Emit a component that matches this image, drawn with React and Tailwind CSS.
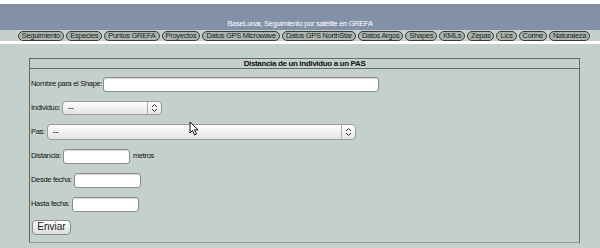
import React from 'react'

const NAV = ['Seguimiento', 'Especies', 'Puntos GREFA', 'Proyectos', 'Datos GPS Microwave', 'Datos GPS NorthStar', 'Datos Argos', 'Shapes', 'KMLs', 'Zepas', 'Lics', 'Corine', 'Naturaleza']

function Field({ w }) {
  return <div className={`h-[15px] ${w} rounded-[3px] border border-[#8c8c8c] bg-white shadow-[inset_0_1px_1px_rgba(0,0,0,0.15)]`} />
}

function Select({ w, h }) {
  return (
    <div className={`${h} ${w} flex items-center rounded-[4px] border border-[#9a9a9a] bg-gradient-to-b from-white to-[#e4e4e4]`}>
      <span className="flex-1 pl-[5px] text-[9px] leading-none text-[#222]">--</span>
      <span className="h-full w-px bg-[#b0b0b0]" />
      <svg width="11" height="10" viewBox="0 0 11 10" className="mx-[1px]">
        <path d="M3 4 L5.5 1.5 L8 4 M3 6 L5.5 8.5 L8 6" fill="none" stroke="#333" strokeWidth="1" />
      </svg>
    </div>
  )
}

function Row({ children }) {
  return <div className="flex h-[24px] items-center">{children}</div>
}

export default function App() {
  return (
    <div className="relative h-[248px] w-[600px] overflow-hidden bg-[#c4d0cb] text-[#111]" style={{ fontFamily: '"Liberation Sans", Arial, sans-serif' }}>
      <div className="h-[4px] bg-white" />
      <div className="flex h-[26px] items-end justify-center bg-[#8291a8] pb-[3px] text-[7.5px] leading-none tracking-[-0.3px] text-white">
        BaseLunar, Seguimiento por satelite en GREFA
      </div>
      <div className="flex h-[11px] items-center justify-center gap-[2px] bg-[#c4d0cb] pl-[8px]">
        {NAV.map(n => (
          <span key={n} className="rounded-[5px] border border-[#3a3a3a] bg-[#a9b5ae] px-[3px] text-[7.5px] leading-[8px] tracking-[-0.3px] text-[#222]">{n}</span>
        ))}
      </div>
      <div className="h-[3px] bg-white" />

      <div className="ml-[29px] mt-[14px] w-[551px] border border-[#646a66] border-b-[#8f9a95]">
        <div className="flex h-[10px] items-center justify-center border-b border-[#646a66] text-[8px] font-bold leading-none tracking-[-0.35px]">
          Distancia de un individuo a un PAS
        </div>
        <div className="flex flex-col pl-[1px] pt-[3px] pb-[4px] text-[7.5px] leading-none tracking-[-0.3px]">
          <Row>
            <span className="mr-[1px]">Nombre para el Shape:</span>
            <Field w="w-[276px]" />
          </Row>
          <Row>
            <span className="mr-[2px]">Individuo:</span>
            <Select w="w-[100px]" h="h-[14px]" />
          </Row>
          <Row>
            <span className="mr-[2px]">Pas:</span>
            <Select w="w-[309px]" h="h-[16px]" />
          </Row>
          <Row>
            <span className="mr-[2px]">Distancia:</span>
            <Field w="w-[67px]" />
            <span className="ml-[3px]">metros</span>
          </Row>
          <Row>
            <span className="mr-[2px]">Desde fecha:</span>
            <Field w="w-[67px]" />
          </Row>
          <Row>
            <span className="mr-[2px]">Hasta fecha:</span>
            <Field w="w-[67px]" />
          </Row>
          <div className="flex h-[22px] items-center pl-[1px]">
            <button className="h-[15px] w-[39px] rounded-[4px] border border-[#8a8a8a] bg-gradient-to-b from-white to-[#dcdcdc] text-[10px] leading-none tracking-normal text-[#222]">Enviar</button>
          </div>
        </div>
      </div>

      <svg className="absolute left-[189px] top-[121px]" width="12" height="16" viewBox="0 0 12 16">
        <path d="M1 1 L1 12 L3.5 9.5 L5.5 14 L7.5 13 L5.5 8.8 L9 8.8 Z" fill="#fff" stroke="#111" strokeWidth="1" strokeLinejoin="round" />
      </svg>
    </div>
  )
}
